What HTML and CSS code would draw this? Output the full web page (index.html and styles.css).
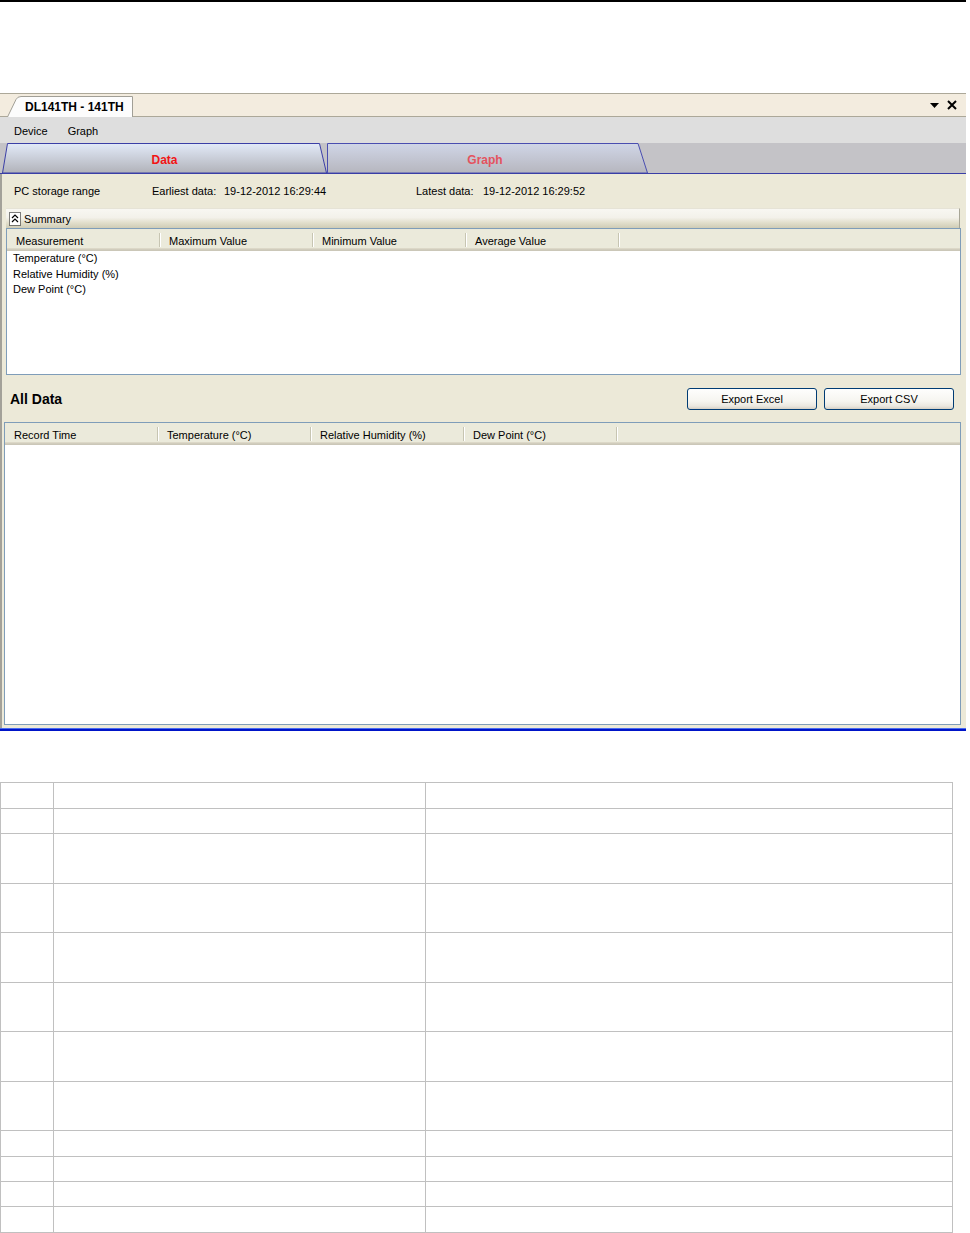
FILE: index.html
```html
<!DOCTYPE html>
<html>
<head>
<meta charset="utf-8">
<title>DL141TH - 141TH</title>
<link rel="stylesheet" href="styles.css">
</head>
<body>
<div class="topline"></div>
<div class="window">
  <div class="doctabs">
    <div class="doctab">
      <svg class="shape" viewBox="0 0 126 21" preserveAspectRatio="none"><path d="M0.5 21 L9 3.5 Q10.5 0.5 14 0.5 L125.5 0.5 L125.5 21" fill="#fcfcfc" stroke="#a19f96"/></svg>
      <span class="doctab-label">DL141TH - 141TH</span>
    </div>
    <div class="doctools">
      <svg width="9" height="5" viewBox="0 0 9 5"><polygon points="0,0 9,0 4.5,5" fill="#000"/></svg>
      <svg width="10" height="10" viewBox="0 0 10 10"><path d="M1 1 L9 9 M9 1 L1 9" stroke="#000" stroke-width="2"/></svg>
    </div>
  </div>
  <div class="menubar"><span>Device</span><span>Graph</span></div>
  <div class="viewtabs">
    <div class="vtab vtab-data">
      <svg class="shape" viewBox="0 0 325 30" preserveAspectRatio="none">
        <defs><linearGradient id="gd" x1="0" y1="0" x2="0" y2="1"><stop offset="0" stop-color="#e2eaf8"/><stop offset="1" stop-color="#b1b2b9"/></linearGradient></defs>
        <polygon points="0.5,30 5.5,0.5 317.5,0.5 324.5,30" fill="url(#gd)" stroke="#3b3fa6"/>
      </svg>
      <span class="vtab-label">Data</span>
    </div>
    <div class="vtab vtab-graph">
      <svg class="shape" viewBox="0 0 321 30" preserveAspectRatio="none">
        <defs><linearGradient id="gg" x1="0" y1="0" x2="0" y2="1"><stop offset="0" stop-color="#d0d6e7"/><stop offset="1" stop-color="#b6b6be"/></linearGradient></defs>
        <polygon points="0.5,0.5 311,0.5 320.5,30 0.5,30" fill="url(#gg)" stroke="#4a4eb0"/>
      </svg>
      <span class="vtab-label">Graph</span>
    </div>
  </div>
  <div class="content">
    <div class="range">
      <span class="r-title">PC storage range</span>
      <span class="r-label1">Earliest data:</span>
      <span class="r-val1">19-12-2012 16:29:44</span>
      <span class="r-label2">Latest data:</span>
      <span class="r-val2">19-12-2012 16:29:52</span>
    </div>
    <div class="summary-head">
      <svg class="collapse" width="12" height="14" viewBox="0 0 12 14">
        <rect x="0.5" y="0.5" width="11" height="13" fill="#fff" stroke="#000" stroke-dasharray="1 1"/>
        <path d="M3 6 L6 3 L9 6 M3 10 L6 7 L9 10" fill="none" stroke="#000" stroke-width="1.2"/>
      </svg>
      <span>Summary</span>
    </div>
    <div class="list summary-list">
      <div class="list-head">
        <div class="hcell">Measurement</div>
        <div class="hcell">Maximum Value</div>
        <div class="hcell">Minimum Value</div>
        <div class="hcell">Average Value</div>
      </div>
      <div class="list-body">
        <div class="lrow">Temperature (°C)</div>
        <div class="lrow">Relative Humidity (%)</div>
        <div class="lrow">Dew Point (°C)</div>
      </div>
    </div>
    <div class="alldata-bar">
      <span class="alldata-title">All Data</span>
      <div class="buttons">
        <button class="btn">Export Excel</button>
        <button class="btn">Export CSV</button>
      </div>
    </div>
    <div class="list data-list">
      <div class="list-head">
        <div class="hcell">Record Time</div>
        <div class="hcell">Temperature (°C)</div>
        <div class="hcell">Relative Humidity (%)</div>
        <div class="hcell">Dew Point (°C)</div>
      </div>
      <div class="list-body"></div>
    </div>
  </div>
  <div class="bottomline"></div>
</div>
<div class="doc-table">
  <div class="c r26"></div><div class="c r26"></div><div class="c r26"></div>
  <div class="c r25"></div><div class="c r25"></div><div class="c r25"></div>
  <div class="c r50"></div><div class="c r50"></div><div class="c r50"></div>
  <div class="c r49"></div><div class="c r49"></div><div class="c r49"></div>
  <div class="c r50"></div><div class="c r50"></div><div class="c r50"></div>
  <div class="c r49"></div><div class="c r49"></div><div class="c r49"></div>
  <div class="c r50"></div><div class="c r50"></div><div class="c r50"></div>
  <div class="c r49"></div><div class="c r49"></div><div class="c r49"></div>
  <div class="c r26"></div><div class="c r26"></div><div class="c r26"></div>
  <div class="c r25"></div><div class="c r25"></div><div class="c r25"></div>
  <div class="c r25"></div><div class="c r25"></div><div class="c r25"></div>
  <div class="c r26"></div><div class="c r26"></div><div class="c r26"></div>
</div>
</body>
</html>
```
FILE: styles.css
```css
* { box-sizing: border-box; }
body {
  margin: 0;
  background: #fff;
  font-family: "Liberation Sans", Arial, sans-serif;
  font-size: 11px;
  color: #000;
}
.topline { width: 966px; height: 2px; background: #000; }
.window { width: 966px; margin-top: 91px; }

.doctabs {
  height: 24px;
  background: #f3ecdf;
  border-top: 1px solid #aca899;
  border-bottom: 1px solid #aca899;
  display: flex;
  align-items: flex-end;
}
.doctab {
  position: relative;
  margin-left: 7px;
  margin-bottom: -1px;
  width: 126px;
  height: 21px;
  display: flex;
  align-items: center;
}
.shape { position: absolute; left: 0; top: 0; width: 100%; height: 100%; }
.doctab-label {
  position: relative;
  padding-left: 18px;
  padding-top: 1px;
  font-weight: bold;
  font-size: 12px;
}
.doctools {
  margin-left: auto;
  margin-right: 9px;
  align-self: center;
  display: flex;
  align-items: center;
  gap: 8px;
}

.menubar {
  height: 26px;
  background: #dedede;
  display: flex;
  align-items: center;
  gap: 20px;
  padding-left: 14px;
  padding-top: 2px;
}

.viewtabs {
  height: 31px;
  background: #c4c3c7;
  border-bottom: 1px solid #3a3ea6;
  display: flex;
}
.vtab {
  position: relative;
  display: flex;
  align-items: center;
  justify-content: center;
  padding-top: 3px;
}
.vtab-data { margin-left: 2px; width: 325px; }
.vtab-graph { width: 321px; }
.vtab-label { position: relative; font-weight: bold; font-size: 12px; }
.vtab-data .vtab-label { color: #f21414; }
.vtab-graph .vtab-label { color: #e4525e; margin-right: 5px; }

.content {
  height: 554px;
  background: #ece9d8;
  border-left: 2px solid #a3a199;
  display: flex;
  flex-direction: column;
}
.range {
  height: 34px;
  display: flex;
  align-items: center;
  padding-left: 12px;
}
.r-title { width: 138px; }
.r-label1 { width: 72px; }
.r-val1 { width: 192px; }
.r-label2 { width: 67px; }

.summary-head {
  height: 20px;
  margin: 0 6px 0 4px;
  display: flex;
  align-items: center;
  gap: 3px;
  padding-left: 3px;
  border-top: 1px solid #e6e3d6;
  border-right: 1px solid #a8a697;
  background: linear-gradient(#f8f7f2 0%, #f3f1ea 45%, #e2dfcc 72%, #cfccb6 100%);
}

.list {
  background: #fff;
  border: 1px solid #7f9db9;
  display: flex;
  flex-direction: column;
}
.summary-list { height: 147px; margin: 0 5px 0 4px; }
.data-list { height: 303px; margin: 0 5px 0 2px; }
.list-head {
  height: 22px;
  display: flex;
  background: linear-gradient(#ebeadb 0, #ebeadb 19px, #e2decd 19px, #d6d2c2 20px, #cbc7b8 21px);
}
.hcell {
  position: relative;
  width: 153px;
  padding-left: 9px;
  padding-top: 1px;
  display: flex;
  align-items: center;
}
.hcell::after {
  content: "";
  position: absolute;
  right: 0;
  top: 4px;
  bottom: 4px;
  width: 1px;
  background: #c7c5b2;
  box-shadow: 1px 0 0 #fff;
}
.list-body { flex: 1; }
.lrow { height: 15.5px; line-height: 15px; padding-left: 6px; }

.alldata-bar {
  height: 47px;
  display: flex;
  align-items: center;
  padding-left: 8px;
  padding-right: 12px;
}
.alldata-title { font-weight: bold; font-size: 14px; }
.buttons { margin-left: auto; display: flex; gap: 7px; }
.btn {
  width: 130px;
  height: 22px;
  font-family: "Liberation Sans", Arial, sans-serif;
  font-size: 11px;
  color: #000;
  border: 1px solid #003c74;
  border-radius: 3px;
  background: linear-gradient(#fefefd 0%, #f6f5f0 60%, #ebe8e0 85%, #d6d0c5 100%);
  padding: 0;
}

.bottomline {
  height: 3px;
  border-top: 1px solid #4a6cf0;
  background: #0014c8;
}

.doc-table {
  margin-top: 51px;
  width: 953px;
  display: grid;
  grid-template-columns: 53px 372px 527px;
  border-top: 1px solid #c0c0c0;
  border-left: 1px solid #c0c0c0;
}
.c { border-right: 1px solid #c0c0c0; border-bottom: 1px solid #c0c0c0; }
.r25 { height: 25px; }
.r26 { height: 26px; }
.r49 { height: 49px; }
.r50 { height: 50px; }
```
